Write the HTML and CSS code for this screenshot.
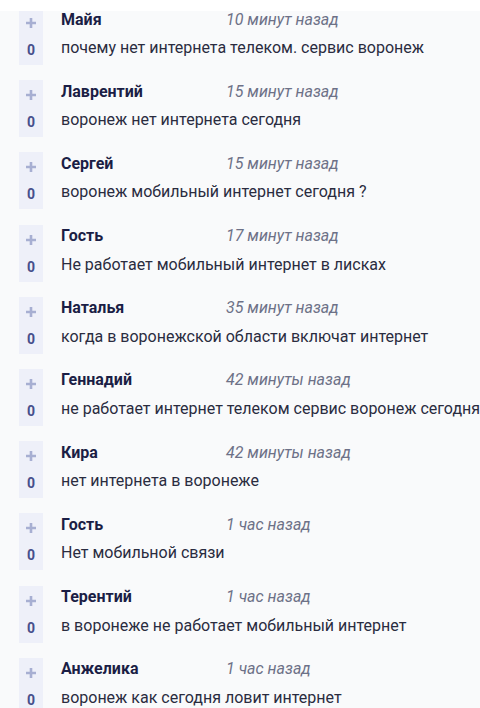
FILE: index.html
```html
<!DOCTYPE html>
<html lang="ru">
<head>
<meta charset="utf-8">
<link rel="stylesheet" href="styles.css">
</head>
<body>
<div class="topbar"></div>
<ul class="list">
  <li class="item">
    <div class="vote"><svg class="plus" viewBox="0 0 10 10"><path d="M5 0V10M0 5H10"/></svg><span class="count">0</span></div>
    <div class="body"><div class="meta"><span class="name">Майя</span><span class="time">10 минут назад</span></div><p class="msg">почему нет интернета телеком. сервис воронеж</p></div>
  </li>
  <li class="item">
    <div class="vote"><svg class="plus" viewBox="0 0 10 10"><path d="M5 0V10M0 5H10"/></svg><span class="count">0</span></div>
    <div class="body"><div class="meta"><span class="name">Лаврентий</span><span class="time">15 минут назад</span></div><p class="msg">воронеж нет интернета сегодня</p></div>
  </li>
  <li class="item">
    <div class="vote"><svg class="plus" viewBox="0 0 10 10"><path d="M5 0V10M0 5H10"/></svg><span class="count">0</span></div>
    <div class="body"><div class="meta"><span class="name">Сергей</span><span class="time">15 минут назад</span></div><p class="msg">воронеж мобильный интернет сегодня ?</p></div>
  </li>
  <li class="item">
    <div class="vote"><svg class="plus" viewBox="0 0 10 10"><path d="M5 0V10M0 5H10"/></svg><span class="count">0</span></div>
    <div class="body"><div class="meta"><span class="name">Гость</span><span class="time">17 минут назад</span></div><p class="msg">Не работает мобильный интернет в лисках</p></div>
  </li>
  <li class="item">
    <div class="vote"><svg class="plus" viewBox="0 0 10 10"><path d="M5 0V10M0 5H10"/></svg><span class="count">0</span></div>
    <div class="body"><div class="meta"><span class="name">Наталья</span><span class="time">35 минут назад</span></div><p class="msg">когда в воронежской области включат интернет</p></div>
  </li>
  <li class="item">
    <div class="vote"><svg class="plus" viewBox="0 0 10 10"><path d="M5 0V10M0 5H10"/></svg><span class="count">0</span></div>
    <div class="body"><div class="meta"><span class="name">Геннадий</span><span class="time">42 минуты назад</span></div><p class="msg">не работает интернет телеком сервис воронеж сегодня</p></div>
  </li>
  <li class="item">
    <div class="vote"><svg class="plus" viewBox="0 0 10 10"><path d="M5 0V10M0 5H10"/></svg><span class="count">0</span></div>
    <div class="body"><div class="meta"><span class="name">Кира</span><span class="time">42 минуты назад</span></div><p class="msg">нет интернета в воронеже</p></div>
  </li>
  <li class="item">
    <div class="vote"><svg class="plus" viewBox="0 0 10 10"><path d="M5 0V10M0 5H10"/></svg><span class="count">0</span></div>
    <div class="body"><div class="meta"><span class="name">Гость</span><span class="time">1 час назад</span></div><p class="msg">Нет мобильной связи</p></div>
  </li>
  <li class="item">
    <div class="vote"><svg class="plus" viewBox="0 0 10 10"><path d="M5 0V10M0 5H10"/></svg><span class="count">0</span></div>
    <div class="body"><div class="meta"><span class="name">Терентий</span><span class="time">1 час назад</span></div><p class="msg">в воронеже не работает мобильный интернет</p></div>
  </li>
  <li class="item">
    <div class="vote"><svg class="plus" viewBox="0 0 10 10"><path d="M5 0V10M0 5H10"/></svg><span class="count">0</span></div>
    <div class="body"><div class="meta"><span class="name">Анжелика</span><span class="time">1 час назад</span></div><p class="msg">воронеж как сегодня ловит интернет</p></div>
  </li>
</ul>
</body>
</html>
```
FILE: styles.css
```css
html, body {
  margin: 0;
  padding: 0;
  background: #f9fafb;
  font-family: Roboto, "Noto Sans", sans-serif;
  overflow: hidden;
}
.topbar {
  position: fixed;
  top: 0;
  left: 0;
  right: 0;
  height: 11px;
  background: #ffffff;
  z-index: 2;
}
.list {
  list-style: none;
  margin: 0;
  padding: 8px 0 0 19px;
  display: flex;
  flex-direction: column;
  gap: 15.2px;
}
.item {
  display: flex;
  gap: 18px;
  height: 57px;
}
.vote {
  width: 24px;
  flex: none;
  background: #eef0f9;
  display: flex;
  flex-direction: column;
  align-items: center;
}
.plus {
  width: 10px;
  height: 10px;
  margin-top: 10px;
  stroke: #a7afd2;
  stroke-width: 2.6;
  fill: none;
}
.count {
  margin-top: 14px;
  font-size: 14px;
  line-height: 16px;
  font-weight: 700;
  color: #464f8c;
}
.body {
  display: flex;
  flex-direction: column;
  white-space: nowrap;
}
.meta {
  display: flex;
  height: 22px;
  align-items: center;
}
.name {
  width: 165px;
  font-size: 16px;
  font-weight: 700;
  color: #1b1e45;
}
.time {
  font-size: 16px;
  font-style: italic;
  color: #6d7187;
}
.msg {
  margin: 7px 0 0;
  font-size: 16px;
  line-height: 22px;
  color: #2a2c3f;
}
```
